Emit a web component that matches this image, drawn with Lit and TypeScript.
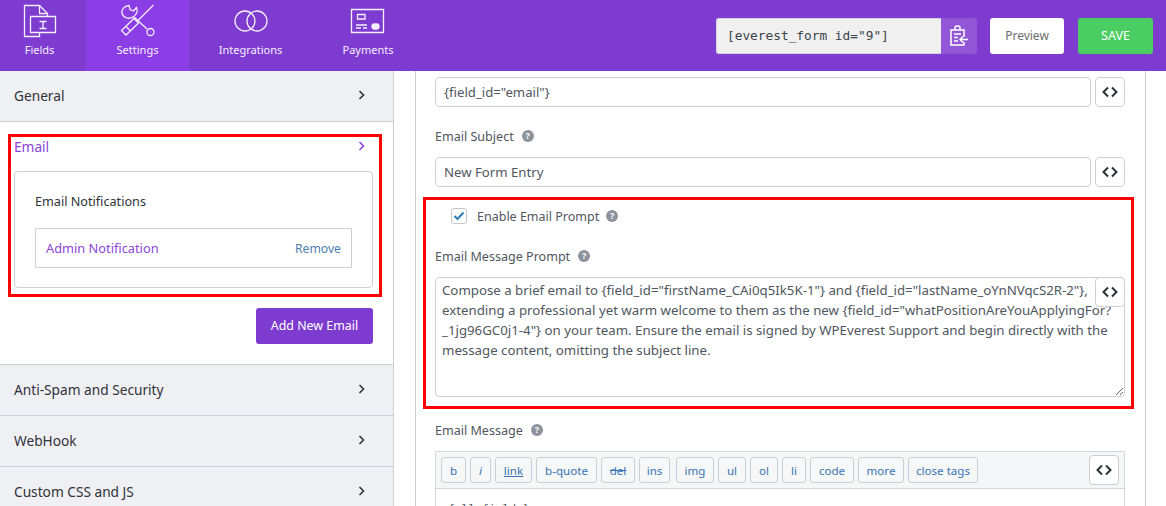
import {LitElement, html, css, svg} from 'lit';
import {customElement} from 'lit/decorators.js';

const promptText = `Compose a brief email to {field_id="firstName_CAi0q5Ik5K-1"} and {field_id="lastName_oYnNVqcS2R-2"},
extending a professional yet warm welcome to them as the new {field_id="whatPositionAreYouApplyingFor?
_1jg96GC0j1-4"} on your team. Ensure the email is signed by WPEverest Support and begin directly with the
message content, omitting the subject line.`;

const icons = {
  fields: svg`<path d="M19.500 31.500V35.500H4.500V4.500H19.500L27.500 12.500V15.500"/><path d="M19.500 4.500V12.500H27.500"/><path d="M10.500 15.500H35.500V31.500H10.500z"/><path d="M19.500 20.500H26.500M19.500 27.500H26.500M23 20.500V27.500"/>`,
  settings: svg`<path d="M11 4.500C6 5 3 9 4 12.500C5.500 17 11 18.500 15 16C19 13.500 20 9.500 18.500 6.500L15.500 10L12 8.500z"/><path d="M16 16L29 28"/><path d="M35.500 4L19 20.500"/><path d="M3.500 29.500L8 34L20.500 22L16 17.500z"/><path d="M8 25.500L12 29.500"/><circle cx="32.500" cy="31" r="3.500"/>`,
  integrations: svg`<circle cx="14" cy="20" r="10"/><circle cx="26" cy="20" r="10"/>`,
  payments: svg`<path d="M3.500 8.500H35.500V31.500H3.500z"/><path d="M9.500 13.500H17V18H9.500zM8 24H19M8 27H13M15 27H19"/><rect x="24" y="23" width="7" height="5" rx="2.500" fill="currentColor"/>`,
};

const chevron = html`<svg class="chev" width="8" height="10" viewBox="0 0 8 10"><path d="M1.500 1l4 4-4 4" fill="none" stroke="currentColor" stroke-width="1.600"/></svg>`;
const codeIcon = html`<svg width="16" height="12" viewBox="0 0 16 12"><path d="M6 1.500 1.500 6 6 10.500M10 1.500 14.500 6 10 10.500" fill="none" stroke="#2c3338" stroke-width="2"/></svg>`;
const help = html`<span class="help">?</span>`;

const tabs = [
  {id: 'fields', label: 'Fields', cls: 'w-fields'},
  {id: 'settings', label: 'Settings', cls: 'w-settings on'},
  {id: 'integrations', label: 'Integrations', cls: 'w-int'},
  {id: 'payments', label: 'Payments', cls: 'w-pay'},
] as const;

const quicktags = [
  {t: 'b', w: 25},
  {t: 'i', w: 21, cls: 'qt-i'},
  {t: 'link', w: 37, cls: 'qt-link'},
  {t: 'b-quote', w: 61},
  {t: 'del', w: 34, cls: 'qt-del'},
  {t: 'ins', w: 31},
  {t: 'img', w: 38, cls: 'qt-img'},
  {t: 'ul', w: 28},
  {t: 'ol', w: 28},
  {t: 'li', w: 24},
  {t: 'code', w: 44},
  {t: 'more', w: 46},
  {t: 'close tags', w: 70},
];

@customElement('app-root')
export class AppRoot extends LitElement {
  static styles = css`
    :host {
      display: block;
      position: relative;
      width: 1166px;
      height: 506px;
      overflow: hidden;
      background: #fff;
      color: #383c42;
      font-family: 'Noto Sans', sans-serif;
      font-size: 13px;
    }
    * { box-sizing: border-box; }

    .top {
      display: flex;
      align-items: stretch;
      height: 71px;
      background: #7e3bd0;
      color: #fff;
    }
    .tab {
      display: flex;
      flex-direction: column;
      align-items: center;
      padding-top: 1px;
      font-size: 11px;
      color: #f6effd;
    }
    .tab svg { display: block; fill: none; stroke: currentColor; stroke-width: 1.300; }
    .tab span { line-height: 18px; }
    .w-fields { width: 86px; padding-right: 7px; }
    .w-fields svg { margin-left: 1px; }
    .w-settings { width: 103px; }
    .w-int { width: 123px; }
    .w-pay { width: 112px; }
    .on { background: #8b3ee6; }

    .actions {
      display: flex;
      align-items: center;
      margin-left: auto;
      padding-right: 13px;
    }
    .short {
      display: flex;
      align-items: center;
      width: 225px;
      height: 36px;
      padding-left: 10px;
      background: #f0f0f0;
      border: 1px solid #d5d2de;
      border-right: 0;
      border-radius: 3px 0 0 3px;
      color: #3c434a;
      font-family: 'DejaVu Sans Mono', monospace;
      font-size: 12.800px;
    }
    .copy {
      display: flex;
      align-items: center;
      justify-content: center;
      width: 36px;
      height: 36px;
      background: #9157d6;
      border-radius: 0 3px 3px 0;
    }
    .preview, .save {
      display: flex;
      align-items: center;
      justify-content: center;
      height: 36px;
      border-radius: 3px;
      font-size: 12px;
    }
    .preview { width: 74px; margin-left: 13px; background: #fff; color: #6d6d6d; }
    .save { width: 75px; margin-left: 14px; background: #4bce61; color: #fff; font-size: 12.500px; }

    .body { display: flex; height: 435px; }
    .side {
      width: 394px;
      border-right: 1px solid #cdced6;
    }
    .row {
      display: flex;
      align-items: flex-start;
      justify-content: space-between;
      height: 51px;
      padding: 15px 27px 0 14px;
      background: #eff0f4;
      border-bottom: 1px solid #cdced6;
      font-size: 13.700px;
      line-height: 20px;
      color: #2f3338;
    }
    .chev { display: block; margin-top: 4px; }
    .open {
      height: 243px;
      padding: 15px 20px 0 14px;
      border-bottom: 1px solid #cdced6;
    }
    .open-head {
      display: flex;
      justify-content: space-between;
      padding-right: 7px;
      color: #8b45d8;
      font-size: 13.700px;
      line-height: 20px;
    }
    .card {
      height: 117px;
      margin-top: 14px;
      padding: 20px;
      border: 1px solid #cdced6;
      border-radius: 4px;
    }
    .card h3 { margin: 0; font-size: 12.650px; font-weight: 400; line-height: 18px; color: #2f3338; }
    .notif {
      display: flex;
      justify-content: space-between;
      align-items: center;
      height: 40px;
      margin-top: 18px;
      padding: 0 10px;
      border: 1px solid #cdced6;
      color: #8b45d8;
      font-size: 12.800px;
    }
    .notif small { font-size: 12.200px; color: #4f7db0; }
    .add {
      display: block;
      width: 117px;
      height: 36px;
      margin: 20px 0 0 auto;
      background: #7e3bd0;
      border-radius: 3px;
      color: #fff;
      font-size: 12.400px;
      line-height: 36px;
      text-align: center;
    }

    .gap { width: 21px; }
    .main {
      flex: 0 0 731px;
      padding: 6px 20px 0 19px;
      border-left: 1px solid #cdced6;
      border-right: 1px solid #cdced6;
    }
    .line { display: flex; gap: 4px; }
    .input {
      flex: 1;
      height: 30px;
      padding: 0 8px;
      border: 1px solid #cdced6;
      border-radius: 4px;
      color: #50575e;
      font-size: 13.200px;
      line-height: 28px;
    }
    .code {
      display: flex;
      align-items: center;
      justify-content: center;
      flex: none;
      width: 30px;
      height: 30px;
      background: #fff;
      border: 1px solid #cdced6;
      border-radius: 4px;
    }
    .label {
      display: flex;
      align-items: center;
      gap: 8px;
      height: 20px;
      color: #50575e;
      font-size: 12.550px;
    }
    .subject { margin: 19px 0 11px; }
    .help {
      display: inline-block;
      width: 12px;
      height: 12px;
      border-radius: 50%;
      background: #8b939c;
      color: #fff;
      font-size: 9px;
      font-weight: 700;
      line-height: 12px;
      text-align: center;
    }
    .check {
      display: flex;
      align-items: center;
      height: 20px;
      margin: 19px 0 0 16px;
      color: #50575e;
      font-size: 12.500px;
    }
    .box {
      display: flex;
      align-items: center;
      justify-content: center;
      width: 16px;
      height: 16px;
      margin-right: 10px;
      border: 1px solid #c4c6cc;
      border-radius: 3px;
    }
    .check .help { margin-left: 7px; }
    .prompt-label { margin: 20px 0 11px; }
    .area { position: relative; height: 120px; }
    textarea {
      display: block;
      width: 100%;
      height: 120px;
      padding: 2px 6px;
      border: 1px solid #cdced6;
      border-radius: 4px;
      color: #50575e;
      font-family: inherit;
      font-size: 13.250px;
      line-height: 20px;
      white-space: pre;
      overflow: hidden;
      outline: none;
    }
    .area .code { position: absolute; top: 0; right: 0; }
    .message-label { margin: 23px 0 11px; }
    .editor { border: 1px solid #d6d7db; }
    .bar {
      position: relative;
      display: flex;
      gap: 4px;
      height: 37px;
      padding: 5px 5px;
      background: #f5f6f7;
      border-bottom: 1px solid #d6d7db;
    }
    .bar .code { position: absolute; top: 3px; right: 5px; }
    .qt {
      height: 26px;
      background: #f6f7f7;
      border: 1px solid #cdced6;
      border-radius: 3px;
      color: #3a74b4;
      font-size: 11.600px;
      line-height: 25px;
      text-align: center;
    }
    .qt-i { font-style: italic; }
    .qt-link { text-decoration: underline; }
    .qt-del { text-decoration: line-through; }
    .qt-img { margin-left: 2px; }
    .content {
      padding: 10px 12px;
      font-family: 'DejaVu Sans Mono', monospace;
      font-size: 11.300px;
      line-height: 20px;
      color: #50575e;
    }

    .mark {
      position: absolute;
      border: 3px solid #f00;
      pointer-events: none;
    }
    .mark.a { left: 8px; top: 134px; width: 374px; height: 163px; }
    .mark.b { left: 423px; top: 197px; width: 711px; height: 212px; }
  `;

  render() {
    return html`
      <div class="top">
        ${tabs.map((t) => html`
          <div class="tab ${t.cls}">
            <svg width="40" height="40" viewBox="0 0 40 40">${icons[t.id]}</svg>
            <span>${t.label}</span>
          </div>
        `)}
        <div class="actions">
          <div class="short">[everest_form id="9"]</div>
          <div class="copy">
            <svg width="20" height="22" viewBox="0 0 20 22" fill="none" stroke="#fff" stroke-width="1.500">
              <path d="M15 12V5H2v15h13v-3M6 5V3a2 2 0 0 1 2-2h1a2 2 0 0 1 2 2v2"/>
              <path d="M5 9h7M5 12.500h4M5 16h4M19 14.500h-8M14 11.500l-3 3 3 3"/>
            </svg>
          </div>
          <div class="preview">Preview</div>
          <div class="save">SAVE</div>
        </div>
      </div>
      <div class="body">
        <div class="side">
          <div class="row"><span>General</span>${chevron}</div>
          <div class="open">
            <div class="open-head"><span>Email</span>${chevron}</div>
            <div class="card">
              <h3>Email Notifications</h3>
              <div class="notif"><span>Admin Notification</span><small>Remove</small></div>
            </div>
            <div class="add">Add New Email</div>
          </div>
          <div class="row"><span>Anti-Spam and Security</span>${chevron}</div>
          <div class="row"><span>WebHook</span>${chevron}</div>
          <div class="row"><span>Custom CSS and JS</span>${chevron}</div>
        </div>
        <div class="gap"></div>
        <div class="main">
          <div class="line"><div class="input">{field_id="email"}</div><div class="code">${codeIcon}</div></div>
          <div class="label subject">Email Subject ${help}</div>
          <div class="line"><div class="input">New Form Entry</div><div class="code">${codeIcon}</div></div>
          <div class="check">
            <span class="box">
              <svg width="12" height="10" viewBox="0 0 12 10"><path d="M1.500 5l3 3 6-6.500" fill="none" stroke="#2f7fc1" stroke-width="2.200"/></svg>
            </span>
            Enable Email Prompt ${help}
          </div>
          <div class="label prompt-label">Email Message Prompt ${help}</div>
          <div class="area">
            <textarea .value=${promptText}></textarea>
            <div class="code">${codeIcon}</div>
          </div>
          <div class="label message-label">Email Message ${help}</div>
          <div class="editor">
            <div class="bar">
              ${quicktags.map((q) => html`<div class="qt ${q.cls ?? ''}" style="width:${q.w}px">${q.t}</div>`)}
              <div class="code">${codeIcon}</div>
            </div>
            <div class="content">{all_fields}</div>
          </div>
        </div>
      </div>
      <div class="mark a"></div>
      <div class="mark b"></div>
    `;
  }
}
